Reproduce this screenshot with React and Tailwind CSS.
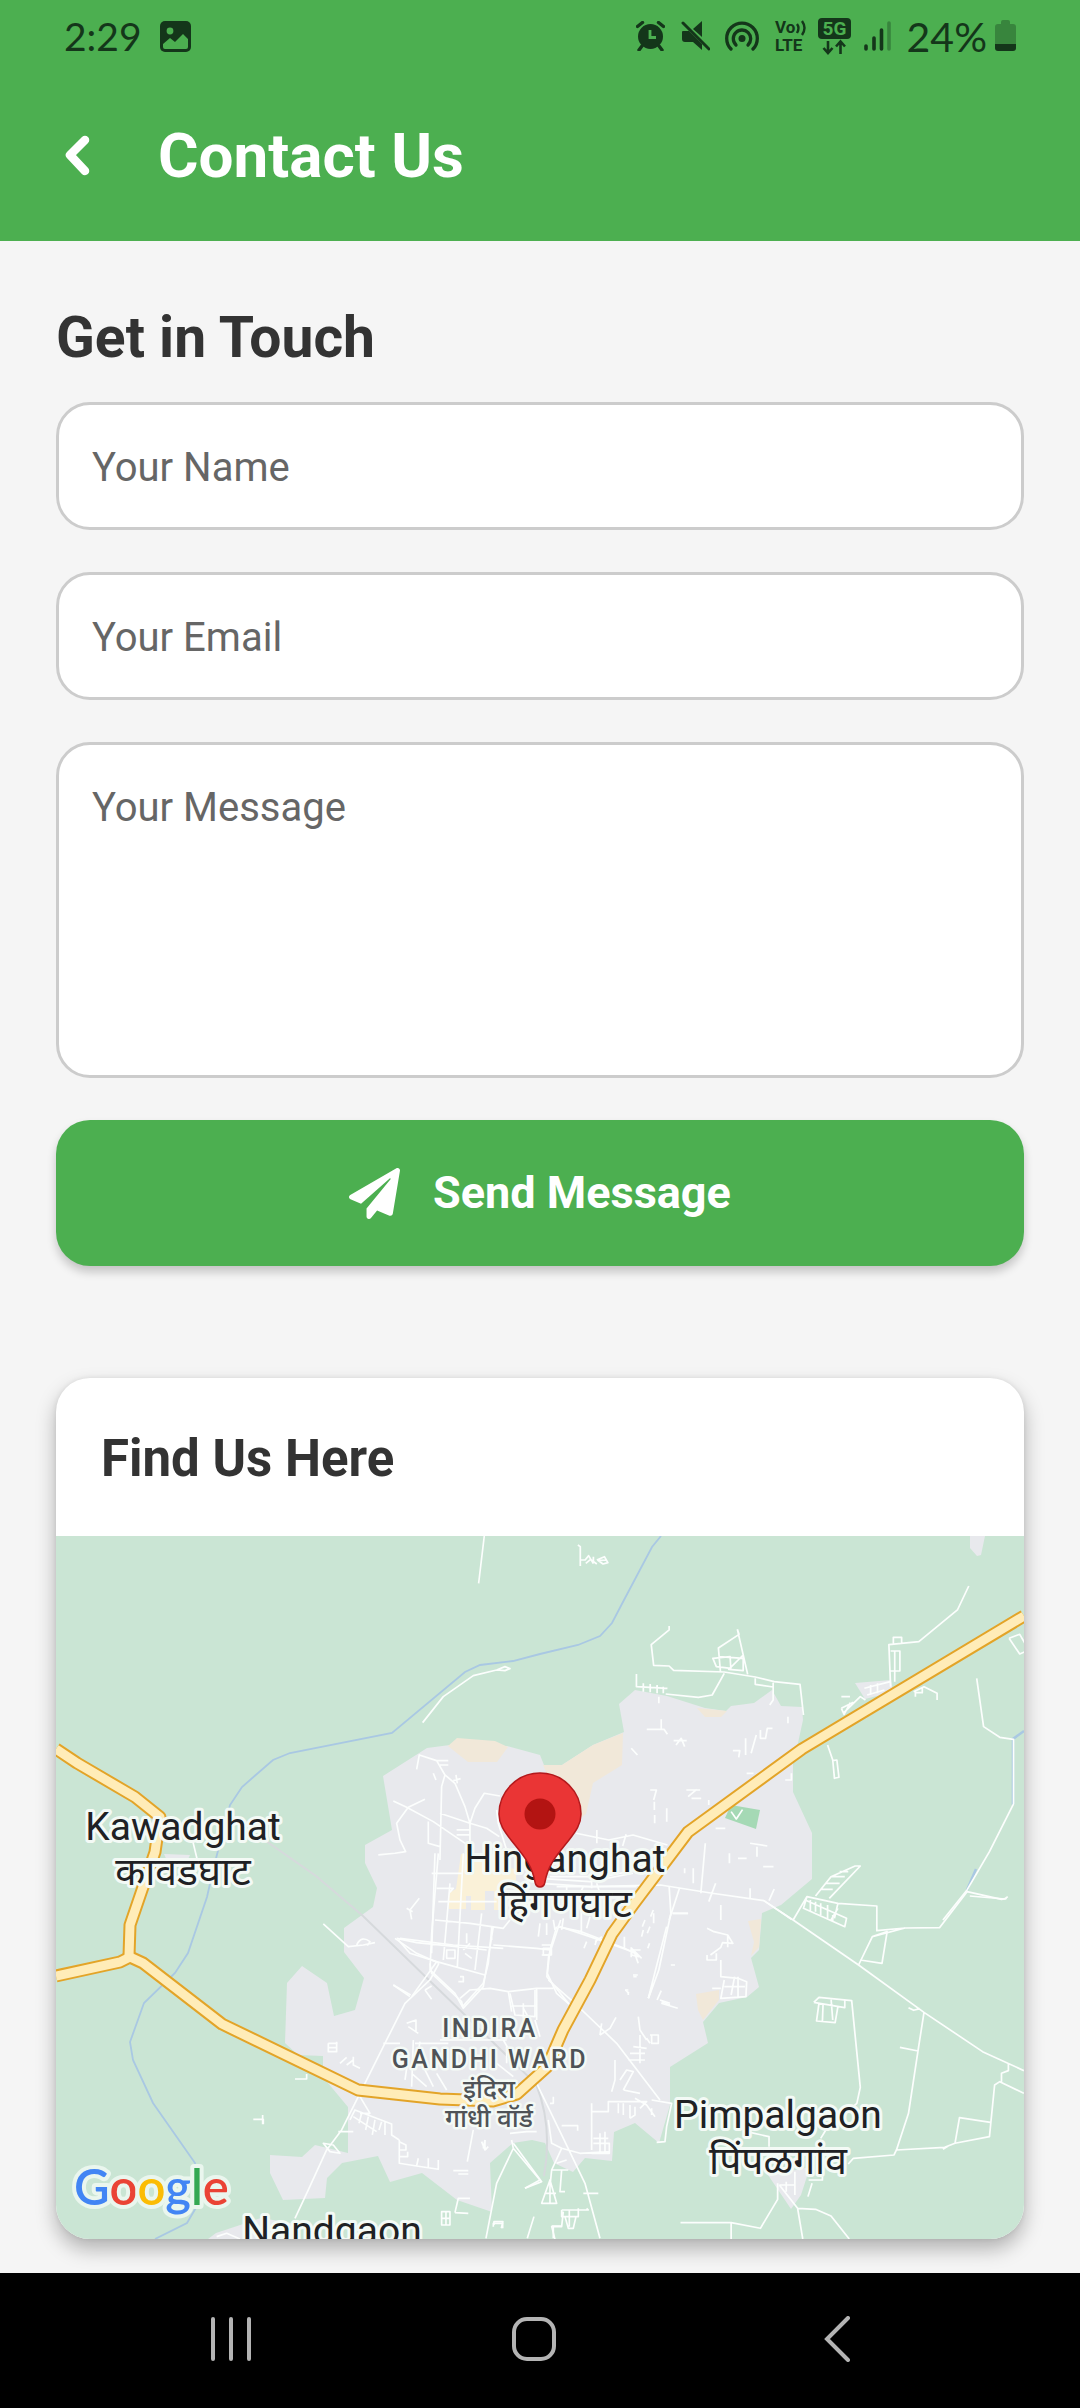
import React from "react";
import { FaPaperPlane } from "react-icons/fa";

const INK = "#14361a";

const TOWN =
  "M327 240 371 212 394 209 451 210 484 219 488 229 506 229 537 209 568 196 563 168 579 154 611 160 649 172 670 175 675 170 698 167 716 154 725 170 746 171 747 184 742 207 737 224 737 256 756 297 756 343 725 369 706 377 703 414 695 422 703 451 691 461 663 467 647 486 652 507 614 531 614 569 603 607 579 587 558 596 556 625 529 622 517 636 498 627 489 607 476 604 457 607 434 627 436 676 401 664 366 637 334 646 322 620 286 627 271 642 269 662 227 664 214 637 214 619 246 621 259 609 292 617 292 571 267 541 267 520 242 519 229 507 231 447 246 430 271 447 278 480 299 474 308 442 288 416 288 392 317 371 321 352 309 327 309 309 336 294Z";

const RIVER =
  "M605 0 596 11 568 64 556 87 544 100 522 109 484 118 457 125 424 129 409 136 336 197 234 217 217 224 186 251 174 269 158 330 151 361 132 417 119 437 88 467 74 506 77 524 97 567 139 627 141 670 131 687 99 703";

const HIGHWAYS = [
  "M0 213 21 227 79 261 104 281 99 316 74 389 73 420",
  "M0 440 64 426 74 421 87 427 166 488 302 554 384 563 437 565 461 558 491 531 507 494 534 444 556 398 577 369 632 296 746 213 968 80",
];

function StatusBar() {
  return (
    <div className="flex h-[72px] items-center justify-between px-16 font-['Lato',sans-serif] text-[39px] leading-none text-[#14361a]">
      <div className="flex items-center gap-[18px]">
        <span>2:29</span>
        <svg width="31" height="31" viewBox="0 0 31 31" aria-label="Screenshot saved">
          <rect width="31" height="31" rx="5" fill={INK} />
          <circle cx="10" cy="10" r="3.4" fill="#4caf50" />
          <path d="M3 23 10 17l5 4 8-8 5 5v8q0 2-2 2H5q-2 0-2-2z" fill="#4caf50" />
        </svg>
      </div>
      <div className="flex items-center">
        <svg className="mr-4" width="29" height="30" viewBox="0 0 29 30" aria-label="Alarm">
          <circle cx="14.5" cy="15.5" r="12.5" fill={INK} />
          <path d="M1.500 5.500 6.500 1.500M22.500 1.500 27.500 5.500M6 25l-3 4M23 25l3 4" stroke={INK} strokeWidth="3.400" strokeLinecap="round" />
          <path d="M14 9v7.500h6" fill="none" stroke="#4caf50" strokeWidth="2.800" />
        </svg>
        <svg className="mr-[15px]" width="29" height="30" viewBox="0 0 29 30" aria-label="Muted">
          <path d="M1 11q0-1 1-1h6l13 13v6l-9-8H4q-3 0-3-3zM12 8l9-8v16z" fill={INK} />
          <path d="M2 2 28 28" stroke={INK} strokeWidth="3" strokeLinecap="round" />
        </svg>
        <svg className="mr-4" width="34" height="30" viewBox="0 0 34 30" aria-label="Hotspot">
          <g fill="none" stroke={INK} strokeWidth="3.300" strokeLinecap="round">
            <path d="M6 28A15.300 15.300 0 1 1 28 28" />
            <path d="M11 24A8.700 8.700 0 1 1 23 24" />
          </g>
          <circle cx="17" cy="17.500" r="3.500" fill={INK} />
        </svg>
        <svg className="mr-3 overflow-visible" width="31" height="32" viewBox="0 0 31 32" aria-label="VoLTE">
          <g fill={INK} fontFamily="Roboto, sans-serif" fontWeight="700">
            <text x="0" y="13" fontSize="17">Vo</text>
            <text x="0" y="31" fontSize="17">LTE</text>
          </g>
          <path d="M22 4q3 4 0 9M27 1q5 7 0 14" fill="none" stroke={INK} strokeWidth="2.400" />
        </svg>
        <svg className="mr-[13px] overflow-visible" width="33" height="37" viewBox="0 0 33 37" aria-label="5G">
          <rect width="33" height="21" rx="4" fill={INK} />
          <text x="16.500" y="17" textAnchor="middle" fontFamily="Roboto, sans-serif" fontWeight="700" fontSize="19" fill="#4caf50">5G</text>
          <path d="M10 23v11M5.500 30l4.500 5 4.500-5M22.500 36V24M18 28.500l4.500-5 4.500 5" fill="none" stroke={INK} strokeWidth="2.600" />
        </svg>
        <svg className="mr-4" width="27" height="30" viewBox="0 0 27 30" aria-label="Signal strength">
          <g stroke={INK} strokeWidth="3.600" strokeLinecap="round">
            <path d="M2 25v3M10 17v11M17.500 9v19" />
            <path d="M25 2v26" opacity=".35" />
          </g>
        </svg>
        <span className="mr-2 text-[41px]">24%</span>
        <svg width="21" height="32" viewBox="0 0 21 32" aria-label="Battery">
          <path d="M6 2q0-2 2-2h5q2 0 2 2v2h3q3 0 3 3v17H0V7q0-3 3-3h3z" fill={INK} opacity=".35" />
          <path d="M0 24h21v4q0 3-3 3H3q-3 0-3-3z" fill={INK} />
        </svg>
      </div>
    </div>
  );
}

const label = {
  textAnchor: "middle",
  fontFamily: "Roboto, 'Noto Sans', sans-serif",
  paintOrder: "stroke",
  stroke: "#f4faf6",
  strokeLinejoin: "round",
};

function Place({ x, y, name, local, localY }) {
  return (
    <g {...label} fill="#202124" strokeWidth="6" fontSize="39">
      <text x={x} y={y}>{name}</text>
      {local && <text x={x} y={localY}>{local}</text>}
    </g>
  );
}

function TownMap() {
  return (
    <svg className="block aspect-[968/703] w-full" viewBox="0 0 968 703" role="img" aria-label="Map of Hinganghat">
      <rect width="968" height="703" fill="#cae5d4" />
      <g fill="#e8e9ed">
        <path d={TOWN} />
        <path d="M914 0h15l-4 19-4 1-7-8zM799 147l36-3 2 12-28 7zM710 636l30-2 14-3-9 28-10 14zM160 697l45-15 30 5 10 16h-93zM108 318l26 1-6 13-16-5z" />
      </g>
      <g fill="#f1e8d9">
        <path d="M392 210 401 202 439 205 452 211 441 226 412 226ZM487 229 506 229 537 209 567 197 566 229 537 247 530 278 513 290 496 250ZM641 172l30 3-6 6h-16zM692 385l13-2-2 28-8 9 3-14zM640 458l23-4v10l-16 20-5-10z" />
      </g>
      <path d="M675 269l29 5-4 19-31-11z" fill="#a5d9b5" />
      <path d="M405 318h34l3 12 18 3v13l-14 3v25h-8v-19h-9v19h-14v-14h-5v13h-17v-16l7-4z" fill="#faf1d8" />
      <path d={RIVER} fill="none" stroke="#a9c8e3" strokeWidth="1.800" />
      <path d="M968 195 957 203V269M920 333 911 354" fill="none" stroke="#a9c8e3" strokeWidth="2.500" />
      <path d="M210 305 260 340 307 380 480 548Q497 590 488 640" fill="none" stroke="#d6d9dc" strokeWidth="2" />

      <g fill="none" stroke="#fcfefd" strokeWidth="5" strokeLinejoin="round">
        <g transform="translate(-16 -176) scale(.3333)">
          <path d="M1333 528 1316 670M1148 1088 1210 1010 1300 947 1370 930 1395 920 1410 926 1395 932 1370 930M1130 1228 1138 1185 1190 1202 1215 1245 1245 1270 1275 1340 1290 1390 1290 1470M1190 1202h35M1200 1215h25M1215 1245 1205 1280 1200 1500M1180 1240l8 20M1248 1245l4 25M1240 1262l22-6M1060 1323 1100 1342 1180 1385 1290 1460M1105 1342 1155 1318M1105 1342 1070 1390 1080 1440 1097 1475 1065 1480 1015 1485M1200 1360 1290 1390 1340 1405 1378 1430M1290 1390 1305 1345 1333 1300 1380 1308M1165 1385V1450L1200 1460M1250 1410h40M1250 1425h40" />
          <path d="M455 1430 472 1500M1370 1350l5 40 25 80" />
        </g>
        <g transform="translate(484 -36) scale(.3444 .3333)">
          <path d="M110 135 117 140V198M117 180h14l10-13 14 24M133 190l14-12 18 14M155 170v20M165 180l22-10 10 18-14 4-14-10 24-2M375 378V390L323 434 330 496 375 498 388 511 535 516 625 531 680 545 755 553 765 645M573 388 578 403 518 444 524 516M573 388 603 523M502 475l50-5 2 35-42-5zM520 470 590 475M548 508 590 465V512ZM535 520 500 585 460 592 365 582M280 522V560l90 5M300 550v25M320 552v25M340 555v25M358 560v20M345 590v20M625 535v18l52 8M677 548V600l-10 15M310 688h50l10 15M352 658v32M388 722h38M395 735l15-20 10 25M560 752h20l-3 20M597 715v50M628 705l-15 55M640 690v25h15l5-30h15M720 650v20M265 745l18 20M320 870h18l-8 30M332 905v25M333 945v25M368 925v40M425 870h40M430 890 455 868M440 895h28M600 820h20M730 820v20h-18" />
          <path d="M1245 258 1212 330 1100 425 1013 434 1018 560M1026 430v-18h24v18M1018 453h27v60h-27M1030 453V545M942 565l75-20M950 585l50-15M960 555v30M980 550v30M875 625l35-18M880 640 930 590 945 600M875 590h25M875 625l8 18 18-35M1085 575 1115 560 1153 580V600M1090 590v-12h20v-15M835 735 850 780 855 835 868 832 862 780 850 782M1268 535 1288 680 1335 712 1375 718V912L1305 1055 1240 1170 1170 1260M1248 1188 1350 1197 1358 1190M1362 415 1393 403 1408 430M1362 415 1393 462 1408 455" />
          <path d="M105 1000 200 1020 270 1005 370 1035M165 990v40M250 1003l-10 35M480 1030 467 1180M550 1060v30M575 1075h25M610 1030 660 1038M630 1040v30M648 1100h30M510 985h28M490 915v-15M0 1135 145 1145 270 1120M0 1150 145 1160 350 1155 500 1180 650 1202 730 1258M150 1130v35M610 1165v30M665 1202l15-35M405 1165 375 1260M385 1240h45M510 1150 490 1205M525 1215v45M445 1105v45M420 1105v15M555 935l15 22 18-28" />
        </g>
        <g transform="translate(-16 284) scale(.3333)">
          <path d="M850 312 925 380 970 375 1005 368M950 375q15-30 40-10l-8 12M1138 235 1110 270 1115 298M1100 265l18 10M640 898h30v15M668 885v28M800 762v15h-35M865 670h28M865 670v25h25v-30M866 683h24M900 730l20-18M920 735l20-15M940 710v25l20 10" />
          <path d="M1197 430 1170 480 1095 550 1040 660 970 800 905 930 860 990 805 1110 765 1195M1030 670H1080M1060 495 1112 525M895 935h45M850 970 870 995 900 1000 880 975ZM960 830 990 880 960 880M930 900 945 870 1055 912 1055 945 1078 960M940 890 1010 935M965 880l-8 30M985 890l-8 40M1005 900l-8 45M1025 905l-8 25M1035 905v40M1078 960V1030L1130 1038 1135 1015M1078 965l20 10v15h-20M1078 1010h25v-15M1165 1015v30M1195 1020v28l-65-10M1240 1052h45M1255 1062h30M1300 930 1282 1025M1325 965l10 25 10-10M1335 960v20" />
          <path d="M1245 1178 1255 1135 1290 1135M1245 1178 1285 1180M1205 1175V1215h25v-40zM1218 1175v40M1205 1195h25M1362 1215v-10h27l-5 20M1482 1190 1462 1255M1535 1218h30M1535 1218l10 40M1415 960 1420 985 1370 1090 1338 1255M1420 985 1500 1080 1455 1105M530 1250 560 1240 600 1257" />
          <path d="M1065 355 1130 400 1197 430M1080 355 1240 375 1390 385M1170 430 1175 460 1265 545 1268 560 1330 490 1345 430 1355 330M1185 100 1175 400M1155 510l20 28M1155 510l20-12" />
        </g>
        <g transform="translate(294 184) scale(.3333)">
          <path d="M265 400 245 640 240 750 315 820 340 865 400 800 430 620M300 490 280 720M340 400 322 740M395 580 375 750M245 460h90M260 505h50l-10 12M265 545H440M255 600 360 610 460 625 480 600M140 655 200 668 320 680 410 690M145 660 180 700 260 725 405 765M430 675 560 685 600 690M425 620v40M260 725 185 830M290 690v25h25v-25zM340 690l20-20M345 700l20 15M350 640v30M330 770h10v15h-15M330 835l30-25 60-5 55 10 10 60M475 815 560 805 610 805M560 805V900M485 858h75M520 850v45M620 620 600 690 592 760 620 820 655 850M580 685h20v20h-20zM630 620 720 650 860 700M845 690l20 20-20-5zM845 685l30 30M570 610l-5 40M590 610v35M610 600l5 30M640 595l-5 35M720 590l-10 35M710 665l-8 20M740 660l-5 15M650 500v30M700 500l-10 20M740 490l10 30M620 500H860M600 470 760 470 860 450" />
          <path d="M895 835 950 620M885 600l-8 20M900 620l-8 20M910 570l-8 20M850 770h10M835 815v10M935 845l25 10" />
        </g>
        <g transform="translate(294 444) scale(.3333)">
          <path d="M170 130l28-10v35M175 140l30 20M190 180 185 320M210 185 200 250M165 300 170 265M185 280 230 320M220 260l30 60M260 280l30 50M195 190h100M270 180h200M520 85 540 120M480 40 495 105 555 110V30M555 120l15 50M440 250l50 40M460 180l40 70M470 200v50M560 310 635 465 705 610 750 775M595 0 680 75 800 190 930 360M600 370h10v-20M595 420 605 490 635 505 690 520 780 515M635 437h48v15M635 505 605 570 600 620M605 570h50M620 550l30-10M575 670l25-70 20 70zM600 600v70M588 640h30M635 570l-5 65h15M700 640h45M610 740v35M635 690h80l-5-5M635 690v20h50v-25M645 710l10 35h15l8-35M658 690v50M605 740h30l5-45M430 740v-10h28v15M725 370 725 510M725 395h50V365h115l-20 20M730 490h48v30h-53M750 460v55M765 455v60M730 475h45M805 370v30M820 370v35M840 375v40M855 380v25l-15 10M905 360 965 370 950 440 945 485 920 487M855 355 890 375 915 410M905 385v20M750 165 780 145 798 112M750 165 755 130M795 240V300l-10 35M820 330l30-55-20-5-20 30M820 330 870 340M865 110 870 150 890 180M850 200l40 5M840 220h45M835 240h50M870 165v85M900 165h25v25h-20v-25M900 190l-10-15M130 15 180 50M825 30h10M910 10 895 55M930 60 960 70M400 490l8 20M400 505l5-25M560 455h-30l-50 5M490 490 575 605 525 625" />
        </g>
        <g transform="translate(484 324) scale(.3444 .3333)">
          <path d="M650 122 735 180 925 315 1115 457 1285 575 1405 632M735 180 775 110 865 130 978 138V212L1060 204 1160 203 1240 95 1340 118 1355 115M775 110 765 145 885 200 890 175 770 120M785 120v35M800 125v30M815 130v35M835 135v40M850 165v20M865 145l-20 35M865 130 855 175M800 108 845 50 915 18 930 18 840 115M815 88h35M830 70h40M845 50h40M870 35h25M965 230 1008 215 993 310 930 300M925 315 965 230 1060 204M1070 443l15 8 18-5M1115 457 1098 570 1070 760 1035 870 1028 885 910 895 895 912M1045 562 1098 573M1035 870 1175 862 1205 850 1305 830 1320 675 1335 665 1405 700M1205 850 1218 773 1308 787M1340 665 1340 640 1360 632V612M1170 868l15-10" />
          <path d="M795 427 810 412 905 422 930 682 920 730 830 810 815 835M795 427 885 443V420M810 430 803 483 857 488 865 440M822 430 820 485M845 415 850 480M600 815 665 830V860M695 975 748 1045 763 1137M690 970V1018L640 1105 555 1088 408 1088M555 1088V1137M748 1045 800 1048 845 1068 898 1137M695 975h45v30M715 965v30M740 935v65M780 960h40v-15M778 1010l12-40" />
          <path d="M485 205 505 215 545 225 560 250 530 248 525 262 495 285M545 225V262M485 285v15h27v-20M525 300 525 350 575 355 600 365 598 410 525 415 535 360M565 350l-10 55M575 350v60M535 380h60M500 385h25M50 200 120 215 245 265 275 280 285 310M262 270h30M265 262v30M245 230v35M180 230l-20 15M120 150 120 220M60 180 25 290 20 350 110 465M5 255h28v30H5M375 80 380 160 345 330 315 415M385 160h45M300 210l-5 20M318 250l-5 15M330 160v30M270 345h14M380 315h12M248 390l10 10M340 420l12-28M352 430l48 15" />
        </g>
      </g>

      <g fill="none" strokeLinejoin="round">
        {HIGHWAYS.map((d) => (
          <path key={d} d={d} stroke="#e3a428" strokeWidth="13" />
        ))}
        {HIGHWAYS.map((d) => (
          <path key={d} d={d} stroke="#ffecb8" strokeWidth="9" />
        ))}
      </g>

      <Place x={127} y={304} name="Kawadghat" local="कावडघाट" localY={349} />
      <Place x={509} y={336} name="Hinganghat" local="हिंगणघाट" localY={381} />
      <Place x={722} y={592} name="Pimpalgaon" local="पिंपळगांव" localY={638} />
      <Place x={276} y={708} name="Nandgaon" />

      <g {...label} fill="#4f5357" strokeWidth="5" fontWeight="500">
        <text className="tracking-widest" x="434" y="501" fontSize="25">INDIRA</text>
        <text className="tracking-widest" x="434" y="532" fontSize="25">GANDHI WARD</text>
        <text x="433" y="562" fontSize="26">इंदिरा</text>
        <text x="433" y="591" fontSize="26">गांधी वॉर्ड</text>
      </g>

      <path d="M484 351q-4 0-5-5c-3-18-13-28-24-42-7-9-12-16-12-26a41 41 0 0 1 82 0c0 10-5 17-12 26-11 14-21 24-24 42q-1 5-5 5z" fill="#ea3535" stroke="#b3191c" strokeWidth="1.500" />
      <circle cx="484" cy="278" r="15.500" fill="#b31412" />

      <text x="18" y="669" fontFamily="Lato, sans-serif" fontWeight="600" fontSize="49" stroke="#eaf6ee" strokeWidth="8" strokeLinejoin="round" paintOrder="stroke">
        <tspan fill="#4285f4">G</tspan>
        <tspan fill="#ea4335">o</tspan>
        <tspan fill="#fbbc04">o</tspan>
        <tspan fill="#4285f4">g</tspan>
        <tspan fill="#34a853">l</tspan>
        <tspan fill="#ea4335">e</tspan>
      </text>
    </svg>
  );
}

const field =
  "block w-full resize-none rounded-[34px] border-[3px] border-[#cccccc] bg-white px-[33px] pt-[40px] pb-[36px] text-[40px] leading-[46px] text-[#333333] outline-none placeholder:text-[#666666] placeholder:opacity-100";

export default function App() {
  return (
    <div className="flex min-h-screen flex-col bg-[#f5f5f5] font-['Roboto',sans-serif]">
      <header className="bg-[#4caf50]">
        <StatusBar />
        <div className="flex items-center px-16 pt-12 pb-[49px] text-white">
          <button type="button" aria-label="Back" className="mr-[66px]">
            <svg className="block" width="28" height="45" viewBox="0 0 28 45">
              <path d="M21 6 6 21l15 16" fill="none" stroke="currentColor" strokeWidth="8.500" strokeLinecap="round" strokeLinejoin="round" />
            </svg>
          </button>
          <h1 className="text-[62px] leading-[72px] font-bold">Contact Us</h1>
        </div>
      </header>

      <main className="flex-1 overflow-hidden px-14 pt-[59px] pb-[34px]">
        <h2 className="mb-[26px] text-[57px] leading-[76px] font-bold text-[#333333]">Get in Touch</h2>
        <form className="flex flex-col gap-[42px]" onSubmit={(e) => e.preventDefault()}>
          <input className={field} type="text" name="name" aria-label="Your Name" placeholder="Your Name" />
          <input className={field} type="email" name="email" aria-label="Your Email" placeholder="Your Email" />
          <textarea className={`${field} min-h-[336px]`} rows={5} name="message" aria-label="Your Message" placeholder="Your Message" />
          <button
            type="submit"
            className="flex items-center justify-center gap-[33px] rounded-[34px] bg-[#4caf50] py-[45px] text-[45px] leading-[56px] font-bold text-white shadow-[0_6px_10px_rgba(0,0,0,0.2)]"
          >
            <FaPaperPlane className="size-[51px]" />
            Send Message
          </button>
        </form>

        <section className="mt-[112px] rounded-[34px] bg-white shadow-[0_10px_20px_rgba(0,0,0,0.28),0_0_5px_rgba(0,0,0,0.08)]">
          <h2 className="px-[45px] pt-[47px] pb-[43px] text-[51px] leading-[68px] font-bold text-[#333333]">Find Us Here</h2>
          <div className="overflow-hidden rounded-b-[34px]">
            <TownMap />
          </div>
        </section>
      </main>

      <nav className="flex h-[135px] items-center bg-black pr-[92px] pb-1 pl-20" aria-label="System navigation">
        <button type="button" aria-label="Recent apps" className="flex flex-1 justify-center">
          <svg width="40" height="44" viewBox="0 0 40 44">
            <path d="M2 2v40M20 2v40M38 2v40" stroke="#b4b4b4" strokeWidth="4" strokeLinecap="round" />
          </svg>
        </button>
        <button type="button" aria-label="Home" className="flex flex-1 justify-center">
          <svg width="44" height="44" viewBox="0 0 44 44">
            <rect x="2" y="2" width="40" height="40" rx="13" fill="none" stroke="#b4b4b4" strokeWidth="4" />
          </svg>
        </button>
        <button type="button" aria-label="Go back" className="flex flex-1 justify-center">
          <svg width="26" height="46" viewBox="0 0 26 46">
            <path d="M24 2 3 23l21 21" fill="none" stroke="#b4b4b4" strokeWidth="4" strokeLinecap="round" />
          </svg>
        </button>
      </nav>
    </div>
  );
}
